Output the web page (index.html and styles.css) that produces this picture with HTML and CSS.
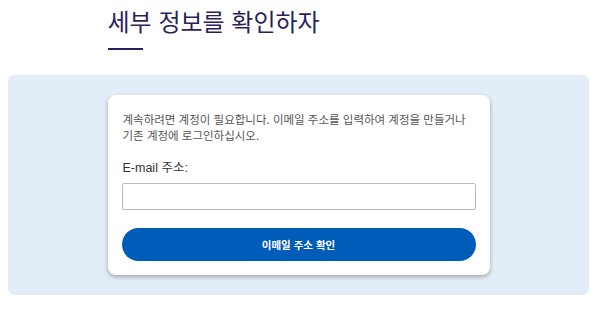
FILE: index.html
```html
<!DOCTYPE html>
<html lang="ko">
<head>
  <meta charset="UTF-8" />
  <meta name="viewport" content="width=device-width, initial-scale=1.0" />
  <title>세부 정보를 확인하자</title>
  <link rel="stylesheet" href="styles.css">
</head>
<body>
  <div class="page">
    <div class="header">
      <h1>세부 정보를 확인하자</h1>
      <div class="rule"></div>
    </div>

    <div class="panel">
      <form class="card" onsubmit="return false;">
        <p class="intro">계속하려면 계정이 필요합니다. 이메일 주소를 입력하여 계정을 만들거나 기존 계정에 로그인하십시오.</p>
        <label class="label" for="email">E-mail 주소:</label>
        <input type="email" id="email" class="field">
        <button type="submit" class="button">이메일 주소 확인</button>
      </form>
    </div>
  </div>
</body>
</html>
```

FILE: styles.css
```css
* {
  margin: 0;
  padding: 0;
  box-sizing: border-box;
  font-family: 'Liberation Sans', 'Noto Sans CJK KR', sans-serif;
}

body {
  background: #ffffff;
}

.page {
  width: 581px;
  margin-left: 8px;
}

.header {
  width: 382px;
  margin: 0 auto;
  padding-top: 5px;
  height: 75px;
}

.header h1 {
  font-family: 'Noto Sans CJK KR', sans-serif;
  font-weight: 400;
  font-size: 24px;
  line-height: 32px;
  color: #2b1f5e;
}

.rule {
  width: 35px;
  height: 2px;
  margin-top: 11px;
  background: #2b1f5e;
}

.panel {
  background: #e3edf7;
  border-radius: 6px;
  padding: 20px 0;
}

.card {
  width: 382px;
  margin: 0 auto;
  background: #ffffff;
  border-radius: 8px;
  box-shadow: 0 2px 4px rgba(0,0,0,0.3);
  padding: 16px 14px 14px;
  display: flex;
  flex-direction: column;
}

.intro {
  font-family: 'Noto Sans CJK KR', sans-serif;
  font-size: 11.5px;
  line-height: 16px;
  color: #555555;
  padding-left: 1px;
  word-break: keep-all;
}

.label {
  margin-top: 17px;
  font-size: 12.5px;
  line-height: 16px;
  color: #333333;
  padding-left: 1px;
}

.field {
  margin-top: 7px;
  height: 27px;
  border: 1px solid #bbbbbb;
  border-radius: 2px;
  background: #ffffff;
}

.button {
  margin-top: 18px;
  height: 33px;
  border: none;
  border-radius: 17px;
  background: #005cb9;
  color: #ffffff;
  font-family: 'Noto Sans CJK KR', sans-serif;
  font-weight: 700;
  font-size: 10.5px;
  cursor: pointer;
}
```
